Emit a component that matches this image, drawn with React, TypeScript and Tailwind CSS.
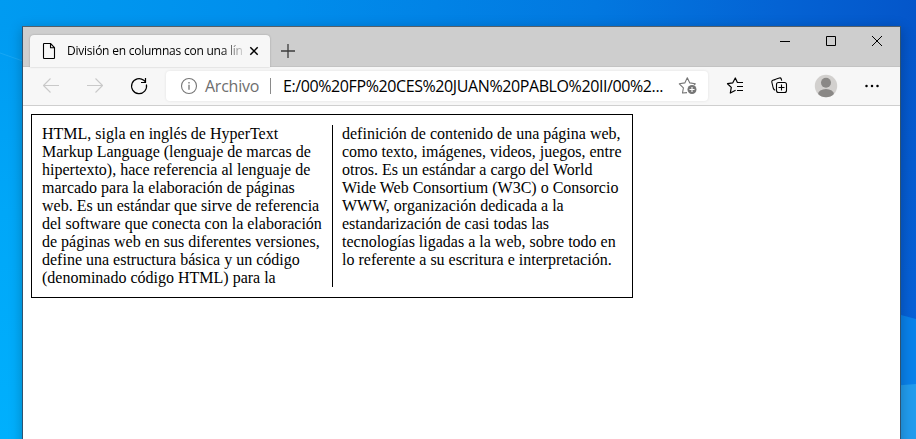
import type { ReactNode } from "react";

const UI = "font-['Open_Sans','Segoe_UI',sans-serif]";

function Icon({ size = 24, className = "", children }: { size?: number; className?: string; children: ReactNode }) {
  return (
    <svg
      width={size}
      height={size}
      viewBox={`0 0 ${size} ${size}`}
      fill="none"
      stroke="currentColor"
      strokeWidth="1.1"
      strokeLinejoin="round"
      className={`block shrink-0 ${className}`}
    >
      {children}
    </svg>
  );
}

function Wallpaper() {
  return (
    <svg className="absolute inset-0" width="916" height="439" viewBox="0 0 916 439" aria-hidden="true">
      <defs>
        <linearGradient id="top" x1="0" y1="0" x2="1" y2="0">
          <stop offset="0" stopColor="#009bf1" />
          <stop offset="0.3" stopColor="#008eec" />
          <stop offset="0.65" stopColor="#0278e0" />
          <stop offset="0.85" stopColor="#0463d4" />
          <stop offset="1" stopColor="#0456ca" />
        </linearGradient>
        <linearGradient id="left" x1="0" y1="0" x2="0" y2="1">
          <stop offset="0" stopColor="#009bf1" />
          <stop offset="0.45" stopColor="#00a7f8" />
          <stop offset="1" stopColor="#00b0fd" />
        </linearGradient>
        <linearGradient id="right" x1="0" y1="0" x2="0" y2="1">
          <stop offset="0" stopColor="#0456ca" />
          <stop offset="1" stopColor="#0765dc" />
        </linearGradient>
      </defs>
      <rect width="916" height="439" fill="url(#top)" />
      <rect y="27" width="40" height="412" fill="url(#left)" />
      <path d="M0 53 L40 67" stroke="#35b4f6" strokeWidth="1" opacity="0.45" />
      <rect x="890" y="27" width="26" height="412" fill="url(#right)" />
      <path d="M890 312 L916 319 V439 H890Z" fill="#0981ea" />
      <path d="M890 386 L916 384 V439 H890Z" fill="#219cee" />
    </svg>
  );
}

function TitleBar() {
  return (
    <header className="flex h-10 items-start bg-[#cecece] pl-[7px] shadow-[inset_0_-1px_0_#c3c3c3]">
      <div className="relative z-10 mt-2 flex h-8 w-[240px] items-center rounded-t-[4px] bg-[#f7f7f7] pl-[12px] shadow-[0_0_2px_rgba(0,0,0,0.25)]">
        <Icon size={16} className="-ml-px text-black">
          <path d="M2.5 1.2 q0-.7.7-.7 H9.5 L13.5 4.7 V14.8 q0 .7-.7.7 H3.2 q-.7 0-.7-.7Z M9.5.7 V4.8 H13.5" />
        </Icon>
        <span className={`${UI} ml-[10px] w-[175px] whitespace-nowrap text-[12px] leading-4 tracking-[-0.23px] text-black [mask-image:linear-gradient(to_right,black_154px,transparent_180px)]`}>
          División en columnas con una lín
        </span>
        <Icon size={10} className="ml-[7px] text-black">
          <path d="M1.3 1.3 L8.7 8.7 M8.7 1.3 L1.3 8.7" strokeWidth="1.5" />
        </Icon>
      </div>
      <Icon size={16} className="ml-[10px] mt-4 text-[#3c3c3c]">
        <path d="M8 1 V15 M1 8 H15" strokeWidth="1.3" />
      </Icon>
      <div className="ml-auto flex pr-[17px] pt-[8px] text-black">
        <Icon size={12}>
          <path d="M1 6.5 H11" strokeWidth="1" />
        </Icon>
        <Icon size={12} className="ml-[34px]">
          <path d="M1.5 1.5 H10.5 V10.5 H1.5Z" strokeWidth="1" strokeLinejoin="miter" />
        </Icon>
        <Icon size={12} className="ml-[34px]">
          <path d="M1 1 L11 11 M11 1 L1 11" strokeWidth="1" />
        </Icon>
      </div>
    </header>
  );
}

function Toolbar() {
  return (
    <nav className="flex h-[39px] items-center border-b border-[#cfcfcf] bg-[#f7f7f7] text-black">
      <Icon size={18} className="ml-[19px] text-[#c9c9c9]">
        <path d="M17 8.5 H1.5 M8.5 1.5 L1.5 8.5 L8.5 15.5" />
      </Icon>
      <Icon size={18} className="ml-[26px] text-[#c9c9c9]">
        <path d="M1 8.5 H16.5 M9.5 1.5 L16.5 8.5 L9.5 15.5" />
      </Icon>
      <Icon size={18} className="ml-[26px]">
        <path d="M16.4 7.5 A7.5 7.5 0 1 1 13.8 3.3 L15.4 4.8 M15.5 1 V5.5 H11" strokeWidth="1.2" strokeLinejoin="miter" />
      </Icon>

      <div className="ml-[18px] flex h-[30px] w-[542px] items-center rounded-[4px] bg-white pl-[14px] shadow-[0_0_3px_rgba(0,0,0,0.09)]">
        <Icon size={18} className="text-[#767676]">
          <circle cx="9" cy="9" r="7.5" />
          <path d="M9 7.7 V12.7 M9 5 V6.4" strokeWidth="1.3" />
        </Icon>
        <span className={`${UI} ml-[7px] w-[54px] whitespace-nowrap text-[16px] leading-5 tracking-[-0.25px] text-[#6e6e6e]`}>Archivo</span>
        <span className="ml-[11px] h-4 w-px bg-[#8a8a8a]" />
        <span className={`${UI} ml-[12px] w-[382px] whitespace-nowrap text-[16px] leading-5 tracking-[-0.4px] text-black`}>
          E:/00%20FP%20CES%20JUAN%20PABLO%20II/00%2...
        </span>
        <Icon size={20} className="ml-[13px] text-[#767676]">
          <path d="M9 16.6 L4.5 17 L5.4 11.8 L1.3 7.8 L6.8 6.9 L9.3 1.7 L11.8 6.9 L17.3 7.8 L16 9" />
          <circle cx="14" cy="13.5" r="4.5" fill="currentColor" stroke="none" />
          <path d="M14 11 V16 M11.5 13.5 H16.5" stroke="white" />
        </Icon>
      </div>

      <Icon size={20} className="ml-[18px]">
        <path d="M9.6 14.3 L4.3 17 L5.3 11.4 L1.5 7.7 L6.8 6.8 L9.3 2 L11.4 6.5 H17 M11 10.5 H17 M11 14.5 H17" strokeWidth="1.2" />
      </Icon>
      <Icon size={20} className="ml-[24px]">
        <path d="M5.2 14.3 Q3.8 14 3.2 12 L1.8 6 Q1.5 4.7 2.8 4.2 L5 3.6 Q5.5 3.1 6.2 3 L9.4 2 Q10.7 1.6 11.2 2.8 L11.7 4.6" />
        <rect x="6.5" y="6.5" width="10" height="10" rx="2" />
        <path d="M11.5 8.5 V14.5 M8.5 11.5 H14.5" />
      </Icon>
      <Icon size={24} className="ml-[24px]">
        <defs>
          <clipPath id="avatar"><circle cx="12" cy="12" r="11.2" /></clipPath>
        </defs>
        <g clipPath="url(#avatar)" stroke="none">
          <rect width="24" height="24" fill="#d2d0ce" />
          <circle cx="12" cy="8.8" r="5" fill="#8a8886" />
          <ellipse cx="12" cy="20.5" rx="8" ry="5.5" fill="#8a8886" />
        </g>
      </Icon>
      <Icon size={16} className="ml-[26px]">
        <g fill="currentColor" stroke="none">
          <circle cx="2.5" cy="8" r="1.25" />
          <circle cx="8" cy="8" r="1.25" />
          <circle cx="13.5" cy="8" r="1.25" />
        </g>
      </Icon>
    </nav>
  );
}

export default function App() {
  return (
    <div className="relative h-[439px] w-[916px] overflow-hidden">
      <Wallpaper />
      <div className="relative ml-[22px] pt-[26px]">
        <div className="h-[500px] w-[879px] border border-[#2f5370] border-t-[#54606a] bg-white shadow-[0_3px_12px_rgba(0,0,0,0.25)]">
          <TitleBar />
          <Toolbar />
          <main className="p-2">
            <div className="w-[602px] columns-2 gap-5 border border-black p-[10px] font-['Liberation_Serif','Times_New_Roman',serif] text-[16px] leading-[18px] text-black [column-fill:balance] [column-rule:1px_solid_black]">
              HTML, sigla en inglés de HyperText Markup Language (lenguaje de marcas de hipertexto), hace referencia al
              lenguaje de marcado para la elaboración de páginas web. Es un estándar que sirve de referencia del software
              que conecta con la elaboración de páginas web en sus diferentes versiones, define una estructura básica y un
              código (denominado código HTML) para la definición de contenido de una página web, como texto, imágenes,
              videos, juegos, entre otros. Es un estándar a cargo del World Wide Web Consortium (W3C) o Consorcio WWW,
              organización dedicada a la estandarización de casi todas las tecnologías ligadas a la web, sobre todo en lo
              referente a su escritura e interpretación.
            </div>
          </main>
        </div>
      </div>
    </div>
  );
}
